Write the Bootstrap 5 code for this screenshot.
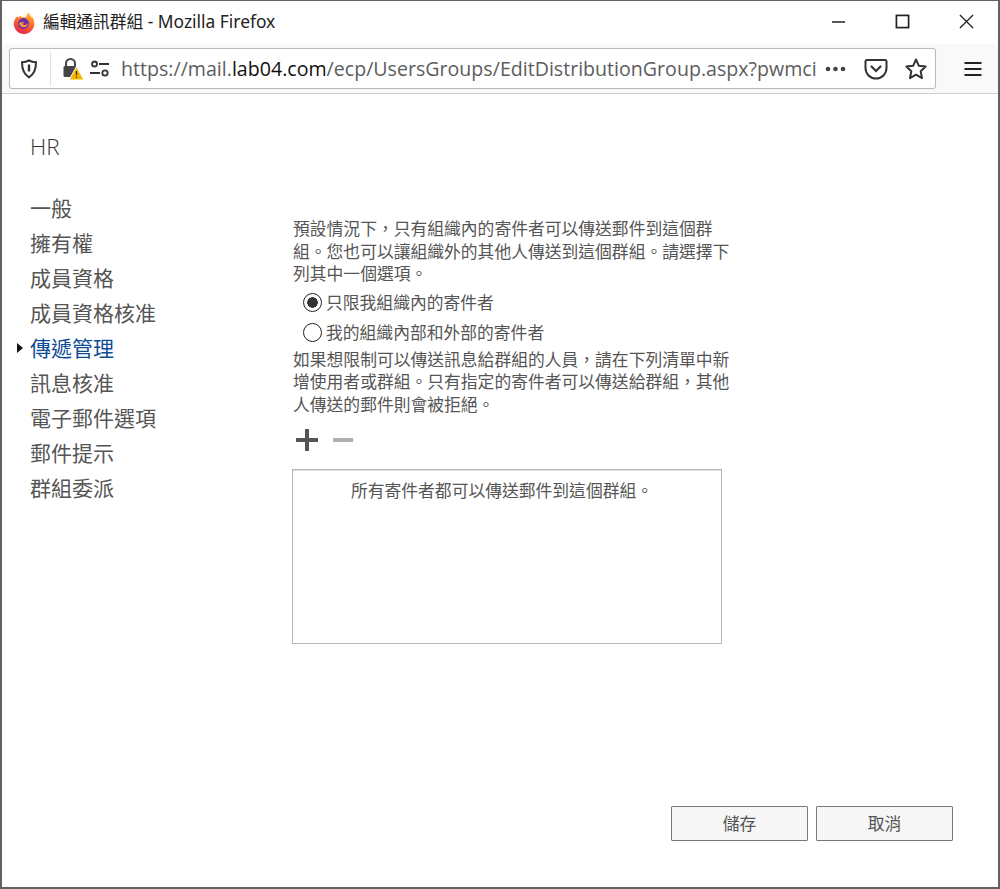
<!DOCTYPE html>
<html lang="zh-TW">
<head>
<meta charset="utf-8">
<title>編輯通訊群組</title>
<link href="https://cdn.jsdelivr.net/npm/bootstrap@5.3.0/dist/css/bootstrap.min.css" rel="stylesheet">
<style>
html,body{height:100%;margin:0;overflow:hidden;background:#fff}
body{font-family:"Noto Sans CJK TC","Noto Sans",sans-serif;color:#444}
.win{width:1000px;height:889px;border:solid #5f6062;border-width:1px 2px 2px 2px;display:flex;flex-direction:column}
.titlebar{height:43px;padding-left:10px;background:#fff}
.titlebar .ttl{font-size:16.7px;color:#222;margin:0 0 2px 7px;line-height:1;white-space:nowrap}
.ttl .latin{font-family:"Noto Sans",sans-serif;font-size:17.4px}
.winbtns{margin:0 0 3px auto}
.winbtn{width:64px;height:32px;display:flex;align-items:center;justify-content:center;color:#222}
.toolbar{height:50px;background:#f9f9fa;border-bottom:1px solid #cfcfd1;padding:4px 0 4px 7px}
.urlbar{width:927px;height:41px;flex:none;background:#fff;border:1px solid #b9babc;border-radius:3px;padding-left:10px;box-shadow:0 0 1px #ddd}
.shieldsep{width:1px;height:35px;background:#e2e2e3;margin:0 10px 0 12px}
.urltxt{font-family:"Open Sans","Noto Sans",sans-serif;font-size:19.6px;color:#5c5d60;margin-left:10px;white-space:nowrap;width:699px;letter-spacing:0}
.urltxt b{font-weight:400;color:#111}
.menuwrap{flex:1}
.content{flex:1;display:flex;flex-direction:column;background:#fff;padding:0 45px 46px 0}
.cols{flex:1;display:flex}
.sidenav{width:291px;padding:38px 0 0 28px;flex:none}
.grpname{font-size:22.5px;font-weight:300;color:#333;line-height:30px;margin-bottom:28px;font-family:"Open Sans",sans-serif}
.navlist{list-style:none;margin:0;padding:0}
.navlist li{font-size:21px;line-height:35px;color:#555;position:relative}
.navlist li.cur{color:#0f4c96}
.navlist li.cur::before{content:"";position:absolute;left:-13px;top:13px;border-left:6px solid #111;border-top:5px solid transparent;border-bottom:5px solid transparent}
.main{width:440px;padding-top:123px;font-size:16.8px;line-height:22.5px;color:#555}
.main p{margin:0}
.optrow{padding-left:10px;height:30px;display:flex;align-items:center;gap:4px}
.optrow:first-of-type{margin-top:3px}
.optrow .form-check-input{width:19px;height:19px;margin:0;border:1.5px solid #222;background-color:#fff;flex:none;background-image:none;box-shadow:none}
.optrow .form-check-input:checked{background-color:#fff;border-color:#222;background-image:radial-gradient(circle,#333 0 5px,transparent 5.5px)}
.optrow label{color:#555}
.tools{height:49px;gap:15px;padding-left:3px}
.sendbox{width:430px;height:175px;border:1px solid #b5b7b8;box-shadow:inset 0 1px 0 #ddd;text-align:center;padding:9px 10px 0 0;color:#555;margin-top:5px;margin-left:-1px}
.footbtns{gap:8px}
.dlgbtn{width:137px;height:35px;background:#f6f6f6;border:1px solid #707a80;border-radius:1px;font-size:16.8px;color:#555;padding:0;line-height:1}
.dlgbtn:hover{background:#f6f6f6;border-color:#707a80;color:#555}
</style>
</head>
<body>
<div class="win">
  <div class="titlebar d-flex align-items-center">
    <svg width="24" height="24" viewBox="0 0 24 24" aria-hidden="true">
      <defs>
        <linearGradient id="fx" x1=".7" y1="0" x2=".3" y2="1"><stop offset="0" stop-color="#ffc02d"/><stop offset=".45" stop-color="#ff6a2b"/><stop offset="1" stop-color="#e5214f"/></linearGradient>
      </defs>
      <path fill="url(#fx)" d="M21.6 8.2c-.5-1.2-1.5-2.5-2.3-2.9.6 1.2 1 2.500 1 2.500C19.400 5.500 17.800 4.500 16.900 1.500 14.800 2.900 14 5.100 14.100 6.400 12.900 5.700 11.300 5.700 10 6.400 9 5.800 8.500 5.100 8.300 4.400 7.500 4.800 7 5.600 6.800 6.800 5.800 6.300 5.400 5.400 5.300 4.900 3 7 1.800 10 1.800 12.700c0 5.700 4.600 10.300 10.200 10.300S22.300 18.400 22.300 12.700C22.300 11.100 22.100 9.500 21.600 8.200z"/>
      <circle cx="11.500" cy="12.500" r="5.400" fill="#6b2fa8"/>
      <path fill="#ff9a2c" d="M7 12c.6 3 3 4.600 5.500 4.300 2.300-.3 3.700-2.400 3.300-4.500-.6 1.700-2 2.500-3.500 2.300-1.300-.2-2-1-2-2 .4.300 1.400.6 2.300-.1-1.300-1-2.500-1.400-3.200-.5C9.300 11 8.900 11.500 7 12z"/>
    </svg>
    <div class="ttl">編輯通訊群組<span class="latin"> - Mozilla Firefox</span></div>
    <div class="winbtns d-flex">
      <div class="winbtn"><svg width="15" height="15" viewBox="0 0 16 16"><path d="M1 8.500h14" stroke="#222" stroke-width="1.600" fill="none"/></svg></div>
      <div class="winbtn"><svg width="15" height="15" viewBox="0 0 16 16"><rect x="1.500" y="1.500" width="13" height="13" fill="none" stroke="#222" stroke-width="1.800"/></svg></div>
      <div class="winbtn"><svg width="15" height="15" viewBox="0 0 16 16"><path d="M1 1l14 14M15 1L1 15" stroke="#222" stroke-width="1.400" fill="none"/></svg></div>
    </div>
  </div>
  <div class="toolbar d-flex align-items-center">
    <div class="urlbar d-flex align-items-center">
      <svg width="18" height="20" viewBox="0 0 18 20" aria-hidden="true"><path d="M9 1.500c2.500 1.300 4.500 1.700 7 1.800 0 7-1.500 11.800-7 15-5.500-3.200-7-8-7-15 2.500-.1 4.500-.5 7-1.800z" fill="none" stroke="#333" stroke-width="2"/><path d="M9 5.500v7" stroke="#333" stroke-width="2.400"/></svg>
      <div class="shieldsep"></div>
      <svg width="24" height="24" viewBox="0 0 24 24" aria-hidden="true"><path d="M5 9V6.500a4.500 4.500 0 0 1 9 0V9" fill="none" stroke="#444" stroke-width="2"/><rect x="2.500" y="9" width="13" height="11" rx="1.500" fill="#444"/><path d="M15.500 9.500l7.500 13.500H8z" fill="#f9b500" stroke="#fff" stroke-width="1"/><path d="M15.500 14v4.500M15.500 19.700v1.300" stroke="#333" stroke-width="1.300"/></svg>
      <svg class="ms-1" width="22" height="20" viewBox="0 0 22 20" aria-hidden="true"><circle cx="5.500" cy="5" r="2.500" fill="none" stroke="#333" stroke-width="1.800"/><path d="M10 5h10M1 14h10" stroke="#333" stroke-width="1.800" fill="none"/><circle cx="16" cy="14" r="2.700" fill="none" stroke="#333" stroke-width="1.800"/></svg>
      <div class="urltxt">https://mail.<b>lab04.com</b>/ecp/UsersGroups/EditDistributionGroup.aspx?pwmci</div>
      <svg class="ms-1" width="24" height="8" viewBox="0 0 24 8" aria-hidden="true"><circle cx="4" cy="4" r="2.300" fill="#444"/><circle cx="11.500" cy="4" r="2.300" fill="#444"/><circle cx="19" cy="4" r="2.300" fill="#444"/></svg>
      <svg class="ms-3" width="24" height="22" viewBox="0 0 24 22" aria-hidden="true"><path d="M3 2h18a1.500 1.500 0 0 1 1.500 1.500V10A10.500 10.500 0 0 1 1.500 10V3.500A1.500 1.500 0 0 1 3 2z" fill="none" stroke="#333" stroke-width="2"/><path d="M7.500 8.500L12 13l4.500-4.500" fill="none" stroke="#333" stroke-width="2.200" stroke-linecap="round"/></svg>
      <svg class="ms-3" width="24" height="24" viewBox="0 0 24 24" aria-hidden="true"><path d="M12 2.500l2.900 6.300 6.800.8-5 4.700 1.300 6.800L12 17.700l-6 3.400 1.300-6.800-5-4.700 6.800-.8z" fill="none" stroke="#333" stroke-width="2" stroke-linejoin="round"/></svg>
    </div>
    <div class="menuwrap d-flex justify-content-end pe-3">
      <svg width="18" height="16" viewBox="0 0 18 16" aria-hidden="true"><path d="M.5 2h17M.5 8h17M.5 14h17" stroke="#222" stroke-width="2.200"/></svg>
    </div>
  </div>
  <div class="content">
    <div class="cols">
      <nav class="sidenav">
        <div class="grpname">HR</div>
        <ul class="navlist">
          <li>一般</li>
          <li>擁有權</li>
          <li>成員資格</li>
          <li>成員資格核准</li>
          <li class="cur">傳遞管理</li>
          <li>訊息核准</li>
          <li>電子郵件選項</li>
          <li>郵件提示</li>
          <li>群組委派</li>
        </ul>
      </nav>
      <main class="main">
        <p>預設情況下，只有組織內的寄件者可以傳送郵件到這個群組。您也可以讓組織外的其他人傳送到這個群組。請選擇下列其中一個選項。</p>
        <div class="optrow"><input class="form-check-input" type="radio" name="snd" id="r1" checked><label for="r1">只限我組織內的寄件者</label></div>
        <div class="optrow"><input class="form-check-input" type="radio" name="snd" id="r2"><label for="r2">我的組織內部和外部的寄件者</label></div>
        <p>如果想限制可以傳送訊息給群組的人員，請在下列清單中新增使用者或群組。只有指定的寄件者可以傳送給群組，其他人傳送的郵件則會被拒絕。</p>
        <div class="tools d-flex align-items-center">
          <svg width="22" height="22" viewBox="0 0 22 22" aria-hidden="true"><path d="M0 11h22M11 0v22" stroke="#555" stroke-width="4"/></svg>
          <svg width="20" height="22" viewBox="0 0 20 22" aria-hidden="true"><path d="M0 11h20" stroke="#aab0b3" stroke-width="4"/></svg>
        </div>
        <div class="sendbox">所有寄件者都可以傳送郵件到這個群組。</div>
      </main>
    </div>
    <div class="footbtns d-flex justify-content-end">
      <button type="button" class="btn dlgbtn">儲存</button>
      <button type="button" class="btn dlgbtn">取消</button>
    </div>
  </div>
</div>
<script src="https://cdn.jsdelivr.net/npm/bootstrap@5.3.0/dist/js/bootstrap.bundle.min.js"></script>
</body>
</html>
